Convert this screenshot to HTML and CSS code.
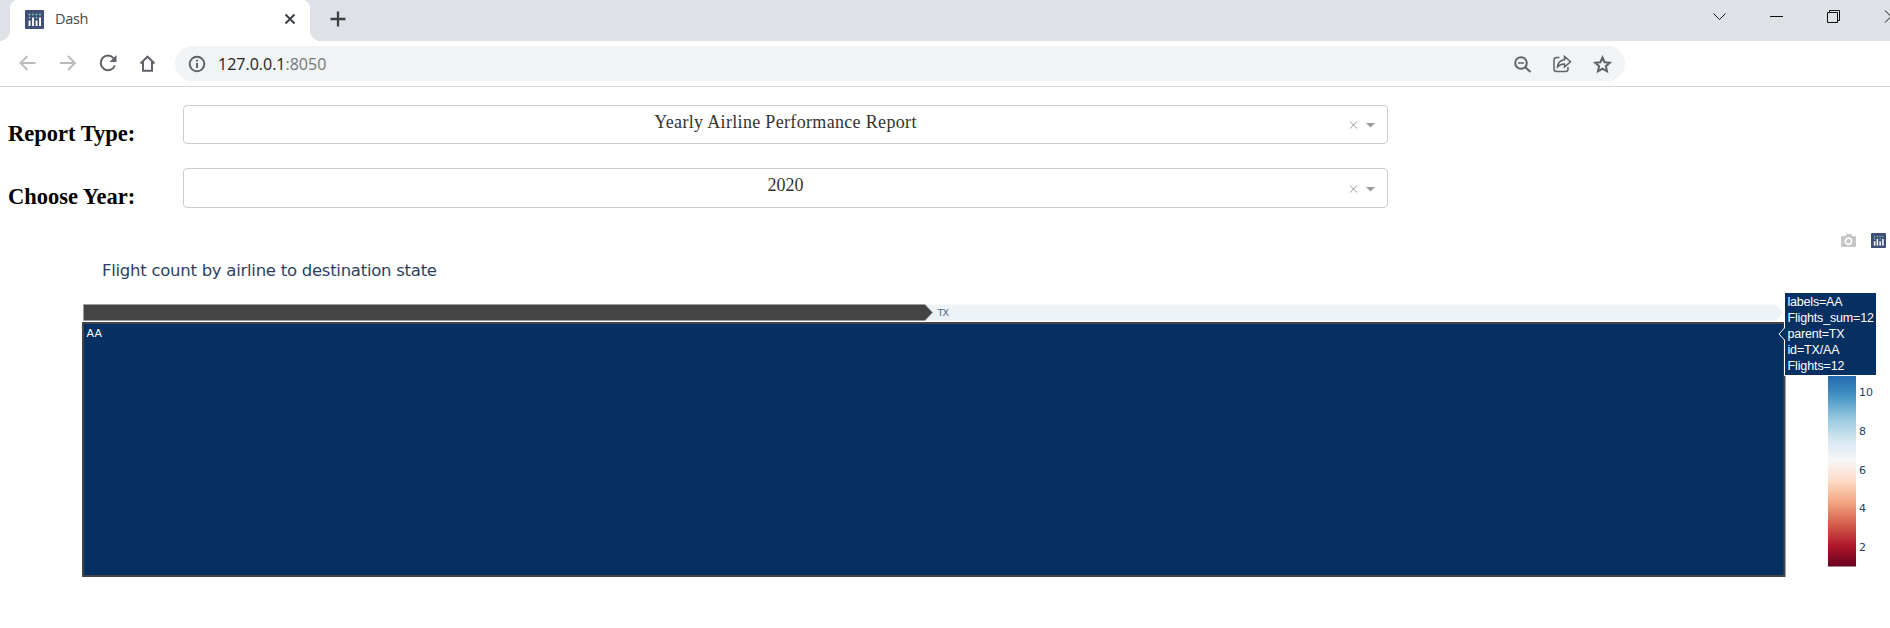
FILE: index.html
```html
<!DOCTYPE html>
<html lang="en">
<head>
<meta charset="utf-8">
<title>Dash</title>
<link rel="stylesheet" href="styles.css">
</head>
<body>
<svg width="0" height="0" class="defs">
  <symbol id="logo" viewBox="0 0 19 19">
    <rect width="19" height="19" rx="1" fill="#3f4f75"/>
    <g fill="#7fcfc0"><circle cx="4.500" cy="4.500" r=".9"/><circle cx="8" cy="4.500" r=".9"/><circle cx="11.500" cy="4.500" r=".9"/><circle cx="15" cy="4.500" r=".9"/><circle cx="4.500" cy="7.700" r=".9"/><circle cx="11.500" cy="7.700" r=".9"/></g>
    <g fill="#fff"><rect x="3.600" y="10.500" width="1.900" height="5.500"/><rect x="7.100" y="7.500" width="1.900" height="8.500"/><rect x="10.600" y="10.500" width="1.900" height="5.500"/><rect x="14.100" y="7.500" width="1.900" height="8.500"/></g>
  </symbol>
</svg>
<header>
  <div class="tabstrip">
    <div class="tab">
      <svg class="favicon" width="19" height="19"><use href="#logo"/></svg>
      <span class="tab-title">Dash</span>
      <svg class="tab-close" width="12" height="12" viewBox="0 0 12 12"><path d="M1.500 1.500l9 9m0-9l-9 9"/></svg>
    </div>
    <svg class="new-tab" width="16" height="16" viewBox="0 0 16 16"><path d="M8 .5v15M.5 8h15"/></svg>
    <svg class="window-controls" width="180" height="20" viewBox="1710 6 180 20">
      <path d="M1713.500 13.500l6 6 6-6M1770 16.500h13M1827.500 12.500h10v10h-10zM1829.500 12.500v-2h10v10h-2M1885 10.500l12 12m0-12l-12 12"/>
    </svg>
  </div>
  <nav class="toolbar">
    <svg class="nav" width="140" height="24" viewBox="18 51 140 24">
      <g class="muted"><path d="M35.500 63H21M27.500 56l-7 7 7 7"/><path d="M60 63h14.500M68 56l7 7-7 7"/></g>
      <path d="M113.800 58.500A7.300 7.300 0 1 0 114.800 65.500"/>
      <path class="solid" d="M116.500 55v7h-7z"/>
      <path d="M140.500 63.500l7-6.800 7 6.800M143 62v8.700h9V62"/>
    </svg>
    <div class="address">
      <svg class="info" width="18" height="18" viewBox="0 0 18 18"><circle cx="9" cy="9" r="7.300"/><path d="M9 8v5M9 4.700v1.800"/></svg>
      <span class="url">127.0.0.1<span class="port">:8050</span></span>
      <svg class="actions" width="104" height="22" viewBox="1510 52 104 22">
        <circle cx="1521" cy="62" r="5.800"/><path class="thin" d="M1518 62h6"/><path d="M1525 66l5.500 5" />
        <path class="thin" d="M1559.500 56.500h-3q-2.500 0-2.500 2.500v9q0 2.500 2.500 2.500h9q2.500 0 2.500-2.500v-2"/>
        <path class="thin" d="M1557.500 66q.5-6.500 7-7.300v-3.200l6 5.200-6 5.300v-3q-4.500 0-7 3z"/>
        <path d="M1602.500 56.500l2.100 4.700 5.200.5-3.900 3.500 1.100 5.100-4.500-2.700-4.500 2.700 1.100-5.100-3.900-3.500 5.200-.5z"/>
      </svg>
    </div>
  </nav>
</header>
<main>
  <div class="row">
    <h2>Report Type:</h2>
    <div class="select"><span class="value spaced">Yearly Airline Performance Report</span><svg class="marks" width="28" height="14" viewBox="0 0 28 14"><path class="clear" d="M2 3.500l7 7m0-7l-7 7"/><path class="arrow" d="M18 5h9l-4.500 4.500z"/></svg></div>
  </div>
  <div class="row second">
    <h2>Choose Year:</h2>
    <div class="select"><span class="value">2020</span><svg class="marks" width="28" height="14" viewBox="0 0 28 14"><path class="clear" d="M2 3.500l7 7m0-7l-7 7"/><path class="arrow" d="M18 5h9l-4.500 4.500z"/></svg></div>
  </div>
  <svg class="chart" width="1890" height="408" viewBox="0 220 1890 408">
    <defs>
      <linearGradient id="rdbu" x1="0" y1="1" x2="0" y2="0">
        <stop offset="0" stop-color="#67001f"/><stop offset=".1" stop-color="#b2182b"/><stop offset=".2" stop-color="#d6604d"/><stop offset=".3" stop-color="#f4a582"/><stop offset=".4" stop-color="#fddbc7"/><stop offset=".5" stop-color="#f7f7f7"/><stop offset=".6" stop-color="#d1e5f0"/><stop offset=".7" stop-color="#92c5de"/><stop offset=".8" stop-color="#4393c3"/><stop offset=".9" stop-color="#2166ac"/><stop offset="1" stop-color="#053061"/>
      </linearGradient>
    </defs>
    <path class="camera" fill-rule="evenodd" d="M1842.500 236h3l1.200-2h4.600l1.200 2h2.500q1 0 1 1v9q0 1-1 1h-12.500q-1.500 0-1.500-1v-9q0-1 1.500-1zM1848.500 237.300a4 4 0 1 0 .01 0zM1848.500 239a2.300 2.300 0 1 1-.01 0z"/>
    <use href="#logo" x="1871" y="233" width="15" height="15"/>
    <text class="title" x="102" y="276" textLength="335">Flight count by airline to destination state</text>
    <path class="crumb" d="M925 304.500H1776l7 8-7 8H925z"/>
    <path class="crumb-root" d="M83.500 304.500H925l7.500 8-7.500 8H83.500z"/>
    <text class="crumb-label" x="937.500" y="316" textLength="11.500">TX</text>
    <rect class="tile" x="83" y="323" width="1701.500" height="253"/>
    <text class="tile-label" x="86.500" y="337" textLength="15.500">AA</text>
    <rect x="1828" y="353" width="28" height="213.500" fill="url(#rdbu)"/>
    <g class="ticks">
      <text x="1859" y="396" textLength="14">10</text><text x="1859" y="435">8</text><text x="1859" y="474">6</text><text x="1859" y="512">4</text><text x="1859" y="551">2</text>
    </g>
    <path class="tip" d="M1779 334l5.500-6V292.500H1876.500V375.500H1784.500V340z"/>
    <g class="tip-text">
      <text x="1787.500" y="306" textLength="55">labels=AA</text>
      <text x="1787.500" y="322" textLength="86.500">Flights_sum=12</text>
      <text x="1787.500" y="338" textLength="57">parent=TX</text>
      <text x="1787.500" y="354" textLength="52">id=TX/AA</text>
      <text x="1787.500" y="370" textLength="57">Flights=12</text>
    </g>
  </svg>
</main>
</body>
</html>
```

FILE: styles.css
```css
* { box-sizing: border-box; }
body { margin: 0; width: 1890px; height: 628px; overflow: hidden; background: #fff; font-family: "Liberation Serif", "Times New Roman", serif; }
svg { display: block; flex: none; }
.defs { height: 0; }
.tabstrip { display: flex; height: 41px; background: #dee1e6; }
.tab { position: relative; display: flex; align-items: center; width: 300px; height: 41px; margin-left: 10px; padding: 0 15px 3px; background: #fff; border-radius: 8px 8px 0 0; }
.tab::before, .tab::after { content: ""; position: absolute; bottom: 0; width: 10px; height: 10px; }
.tab::before { left: -10px; background: radial-gradient(circle at 0 0, transparent 9.500px, #fff 10px); }
.tab::after { right: -10px; background: radial-gradient(circle at 100% 0, transparent 9.500px, #fff 10px); }
.tab-title { flex: 1; margin: -2px 0 0 11px; font: 14.500px "Open Sans", sans-serif; letter-spacing: -.3px; color: #45494d; }
.tab-close, .new-tab { fill: none; stroke: #3c4043; stroke-width: 2; }
.tab-close { margin-right: -1px; }
.new-tab { margin: 11px 0 0 19.500px; stroke-width: 2.300; }
.window-controls { margin: 6px 0 0 auto; fill: none; stroke: #111; stroke-width: 1; }
.toolbar { display: flex; height: 46px; padding: 5px 0 0 18px; border-bottom: 1px solid #d5d7da; }
.nav { margin-top: 5px; fill: none; stroke: #5f6368; stroke-width: 2; }
.nav .muted { stroke: #babcbe; }
.nav .solid { fill: #5f6368; stroke: none; }
.address { display: flex; align-items: center; width: 1450px; height: 35px; margin-left: 17px; padding: 0 11px 0 13px; border-radius: 18px; background: #f1f3f4; }
.info, .actions { fill: none; stroke: #5f6368; stroke-width: 2; }
.actions .thin { stroke-width: 1.500; }
.url { flex: 1; margin-left: 12px; font: 16px "Open Sans", sans-serif; color: #202124; }
.port { color: #73777b; }
.row { display: flex; padding-left: 8px; margin-top: 18px; height: 39px; }
.row.second { margin-top: 24px; height: 40px; }
h2 { width: 175px; margin: 16px 0 0; font-size: 22.500px; line-height: 26px; color: #000; white-space: nowrap; }
.select { display: flex; align-items: center; width: 1205px; border: 1px solid #ccc; border-radius: 4px; padding: 0 11px 0 39px; color: #333; }
.value { flex: 1; text-align: center; font-size: 18px; line-height: 20px; margin-bottom: 6px; }
.spaced { letter-spacing: .33px; }
.marks { margin-top: 1px; }
.clear { fill: none; stroke: #999; stroke-width: 1; }
.arrow { fill: #999; }
.chart { margin-top: 12px; font-family: "DejaVu Sans", Verdana, sans-serif; }
.camera { fill: #c7c7c7; }
.title { font-size: 16.500px; fill: #2a3f5f; }
.crumb { fill: #edf2f6; }
.crumb-root { fill: #444; stroke: #999; stroke-width: .6; }
.crumb-label { font-size: 9.500px; fill: #506784; }
.tile { fill: #053061; stroke: #444; stroke-width: 2; }
.tile-label { font-size: 11px; fill: #fff; }
.ticks { font-size: 11px; fill: #2a3f5f; }
.tip { fill: #053061; stroke: #fff; stroke-width: 1; }
.tip-text { font-family: "Liberation Sans", Arial, sans-serif; font-size: 12.500px; fill: #fff; }
```
